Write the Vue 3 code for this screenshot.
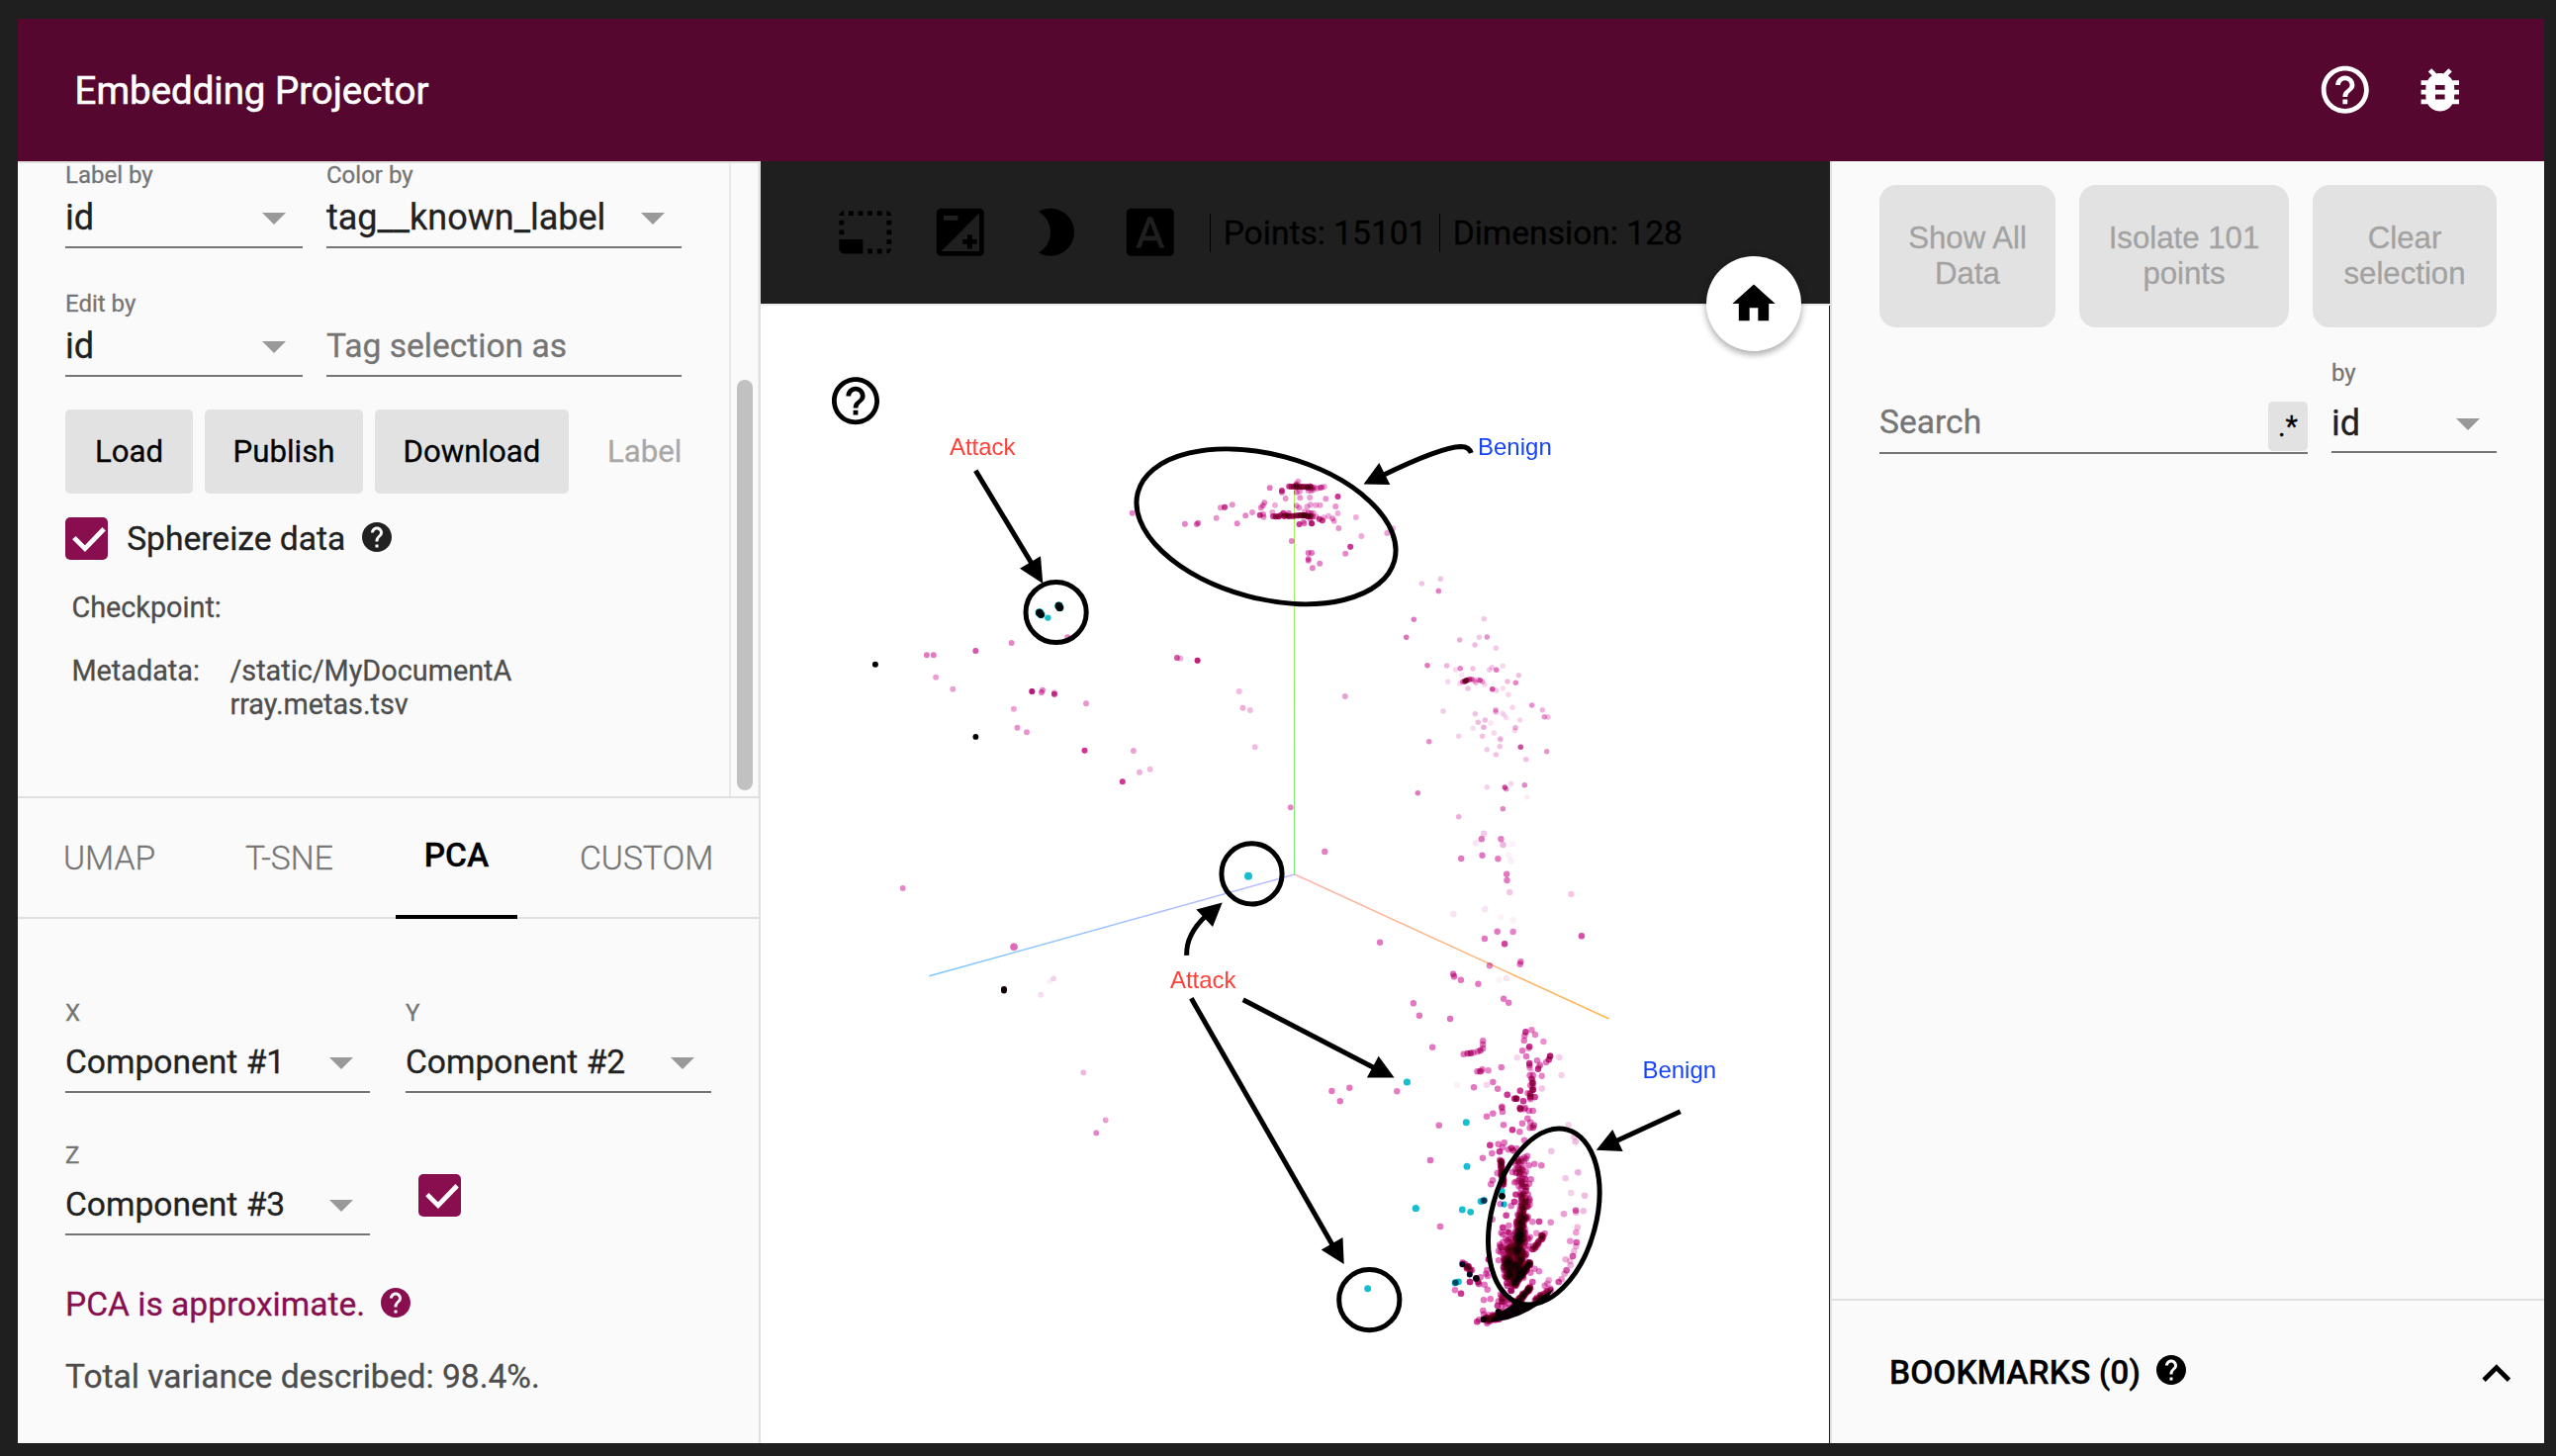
<script setup>
// Points are listed per tile of the canvas as "x,y,strength" in tile units.
// A strength above 1 stands for several samples stacked on one spot.
const tiles = [
  {
    x: 860, y: 400, sx: 2.613, sy: 3, r: 2.95,
    data: `744,356,.9 883,389,.9 914,390,1 918,386,1 966,371,.8 977,340,.8 988,338,2 1008,331,.8 1021,388,.9
    1043,364,.9 1061,354,.8 1084,340,.9 1089,333,.9 1093,325,.9 1081,362,2 1090,360,.9 1091,368,.8 1107,280,1
    1139,288,2 1139,293,1 1149,312,.8 1121,332,.6 1114,354,.7 1182,260,.7 1178,268,1 1178,293,.9 1187,310,.8
    1213,309,.7 1255,313,.8 1287,306,2 1281,336,.8 1287,357,.6 1178,334,.8 1185,340,.8 1206,337,.7 1215,331,.7
    1229,332,.7 1240,332,.7 1262,365,.6 1273,373,.8 1277,380,.7 1238,374,2 1246,379,2 1250,370,.6 1185,390,2
    1198,388,1 1196,382,.8 1218,388,3 1289,402,.8 1335,369,.6 1349,426,.6 1417,417,.7 1432,403,.6 1165,441,.9
    1209,477,1 1218,477,1 1209,495,1 1209,500,1 1220,523,.9 1239,509,.9 1320,458,2 1307,479,.9
    1158,275,2 1164,276,2 1170,276,3 1176,272,2 1178,277,4 1184,276,3 1190,277,3 1196,277,3 1203,277,3 1208,278,4
    1214,275,3 1218,280,2 1224,278,1 1232,281,.8 1240,279,1 1244,278,1 1251,276,.7 1209,288,.8 1217,288,.8 1222,286,.7 1186,290,.8
    1116,366,2 1123,367,3 1130,367,3 1137,362,2 1143,356,2 1145,365,3 1151,364,3 1157,365,4 1157,356,1 1164,365,2
    1170,365,2 1176,364,2 1182,364,3 1189,363,5 1196,363,6 1202,364,4 1208,366,4 1214,365,4 1220,367,1.5
    1199,352,.7 1209,355,1 1216,357,1 1222,356,.7 1229,367,.8 1214,374,1
    573,733,.9 425,750,.9 330,774,1.5 201,787,1 219,787,1 225,854,.7 270,890,.7 479,897,3 504,900,1 507,893,.9
    538,905,2 538,901,.6 622,934,.8 431,950,.7 440,1007,.8 465,1021,.8 618,1076,2 718,1171,2 747,1077,.7 763,1142,.6
    791,1133,.5 862,795,1.5 871,797,.6 916,803,2.7 1026,897,.5 1036,947,.6 1055,954,.5 1068,1066,.5 1306,912,.7
    1162,1249,.9`,
  },
  {
    x: 1380, y: 400, sx: 3, sy: 3, r: 2.75,
    data: `172,570,.45 229,556,.45 223,593,.8 223,590,.3 148,679,1 361,677,.4 125,733,1.1 287,741,.6 346,733,.4 370,732,.8
    333,756,.5 397,766,.4 189,818,1 248,819,.55 275,831,.3 289,827,.9 327,828,.45 377,832,.4 385,824,.4 398,832,1
    418,820,.3 466,848,.45 432,867,.5 457,871,.9 251,868,.3 293,847,.2 303,866,4 307,864,4 311,862,1 317,861,1.6
    324,860,1 331,864,.6 336,870,.6 342,862,.5 349,863,1.3 356,868,.6 296,868,1 288,873,.3 363,876,.3 312,888,.45
    386,890,1.6 398,894,.4 418,888,.25 435,907,.3 506,939,.8 538,953,.55 544,974,.8 555,975,.5 237,957,.4 334,965,.45
    396,954,.8 397,960,.5 447,946,.3 417,963,.25 422,969,.2 428,977,.25 470,984,.3 343,991,.5 364,984,.5 381,993,.2
    328,1009,.25 360,1006,.6 391,1023,.3 456,1007,.6 454,1016,.3 284,1033,.35 356,1033,.45 410,1041,.5 411,1045,.2
    370,1073,.4 409,1064,.45 397,1089,.45 472,1066,1.7 194,1049,.85 551,1079,.8 488,1103,.45 370,1187,.35
    424,1188,1.5 428,1193,.8 443,1177,.3 484,1181,.9 491,1218,.15 160,1205,1 418,1253,.9 284,1277,.6`,
  },
  {
    x: 860, y: 820, sx: 3, sy: 2.8, r: 2.9,
    data: `158,218,.9 615,474,.35 603,482,.12 577,520,.25 706,740,.55 773,875,.7 745,911,.9`,
  },
  {
    x: 1320, y: 820, sx: 2.958, sy: 3, r: 3.2,
    data: `57,123,.95 533,68,.4 526,85,1 584,85,.95 590,102,.55 617,100,.1 509,97,.2 528,134,1 465,144,1 575,145,.95
    608,134,.1 614,151,.12 601,191,1 602,210,1 610,246,.4 794,252,.4 536,298,.2 442,313,.2 583,322,.08 620,330,.1
    573,365,1 620,366,.9 535,387,1 595,403,1.8 825,379,1.6 222,398,1 550,469,.95 643,457,1 641,464,1 441,494,1.2
    444,502,1.2 464,512,1 516,524,1 578,512,.1 601,507,.2 592,569,1 607,581,1 322,583,1 340,620,1 432,630,1.1
    379,716,1 530,697,1 530,708,1 530,720,1 522,726,1.6 514,730,1 501,733,1 493,734,2 484,735,1.6 472,737,1
    513,790,1 521,789,1 528,784,1 524,790,1 546,787,.9 585,777,1 560,822,1 574,842,1 503,838,1 541,830,.3
    453,832,.1 603,860,1 625,872,1 631,872,2 642,848,1 651,880,1 587,896,1 641,900,2 656,900,1 676,664,.9
    658,670,2 655,681,1 686,678,.9 653,696,1 669,715,2 666,720,.6 648,727,1 660,744,1 711,699,.8 632,748,.3
    669,765,2 669,771,1 670,778,.8 692,757,1 701,770,1 695,782,2 697,776,.7 719,762,1 727,754,2 731,743,3
    758,747,.35 765,801,.35 706,803,.9 706,841,.25 670,802,1 680,802,1 676,792,.4 676,812,2 679,826,3 679,819,1 672,832,1 680,845,2
    679,836,1 664,856,1 673,864,1.6 685,868,1 672,874,1 131,839,1 78,849,1 103,880,1 273,850,.95`,
  },
  {
    x: 1300, y: 1100, sx: 3, sy: 3, r: 3.3,
    data: `671,20,1 698,32,2 693,32,1 710,8,.9 748,5,2 741,17,2 741,28,2 755,27,.9 776,2,.2 720,40,1 711,64,2.6
    723,64,1 737,69,1 749,69,1 609,86,1 628,77,1 655,60,1 657,72,1 660,112,1 687,127,2 709,133,1 717,107,1
    733,92,1 752,113,1.5 749,120,1.5 742,104,1 740,121,1 723,158,1 464,113,1 438,219,1.1 468,420,1 619,173,2
    644,170,1 662,166,1 657,180,1 648,193,2 625,198,1 597,212,1 684,182,2 690,190,1.6 675,187,1 700,184,1
    641,258,1 627,280,1 622,292,1 732,206,1 723,211,1 737,235,1 754,230,1 775,235,1 706,222,2 695,228,1
    857,112,.35 805,191,.45 878,163,.5 874,148,.4 886,256,.6 848,274,.4 865,318,.35 906,326,.5 879,371,1.4
    880,377,.5 902,373,.5 843,382,.7 803,407,.85 768,405,1.8 748,406,.9 884,422,.5 880,438,.7 862,464,.8
    881,468,1.4 880,480,.6 874,495,.5 848,520,.6 870,510,1.5 862,525,.5 863,537,.6 851,553,1.5 845,563,.7
    836,580,.8 827,588,1.6 797,583,.7 785,599,.9 793,593,.7 754,548,.9 768,556,.9 742,560,1 748,588,1.5
    743,277,1 738,290,1 650,352,1 668,386,1.8 626,398,1 615,520,2.5 760,440,.8 653,439,1 658,423,2 676,417,1
    683,358,1 693,345,2 649,475,1 645,494,1 652,498,1 513,613,1 531,623,2 558,588,2.6 583,588,2 585,594,1.5
    602,596,1 611,611,1 610,552,1 612,570,1 607,563,1 620,640,1 600,643,1 598,675,1 600,686,1 580,709,1.8
    586,703,1 590,574,1 683,614,4 672,600,1.6 657,627,1 655,647,2 675,635,1.6 642,660,2`,
  },
]

const points = []
const put = (x, y, strength, r) => {
  for (let s = strength; s > 0.01; s -= 1) {
    points.push({ x: x.toFixed(1), y: y.toFixed(1), r, o: Math.min(1, s).toFixed(2) })
  }
}

for (const t of tiles) {
  for (const token of t.data.trim().split(/\s+/)) {
    const [px, py, s] = token.split(',').map(Number)
    put(t.x + px / t.sx, t.y + py / t.sy, s, t.r)
  }
}
put(1025, 957.3, 1.2, 3.8)

// Deterministic noise for the dense streaks of the lower cluster.
let seed = 7
const rnd = () => {
  seed = (seed * 16807) % 2147483647
  return seed / 2147483647
}
// from, to, half width, samples
const streaks = [
  [710, 215, 720, 335, 27, 56],
  [726, 332, 720, 395, 16, 50],
  [716, 385, 706, 470, 19, 90],
  [712, 400, 708, 470, 9, 50],
  [700, 440, 690, 500, 48, 80],
  [692, 480, 690, 560, 50, 110],
  [672, 515, 676, 575, 14, 80],
  [706, 480, 708, 570, 18, 90],
  [686, 565, 700, 590, 32, 40],
  [651, 214, 659, 298, 4, 50],
  [784, 440, 748, 492, 6, 28],
  [742, 528, 692, 598, 6, 120],
  [742, 602, 668, 692, 6, 120],
  [650, 625, 680, 660, 20, 14],
  [606, 704, 664, 684, 14, 60],
  [535, 528, 562, 556, 7, 18],
  [755, 648, 806, 606, 7, 30],
]
for (const [x0, y0, x1, y1, w, n] of streaks) {
  const len = Math.hypot(x1 - x0, y1 - y0)
  for (let i = 0; i < n; i++) {
    const t = rnd()
    const d = (rnd() + rnd() - 1) * w
    put(
      1300 + (x0 + (x1 - x0) * t + ((y0 - y1) / len) * d) / 3,
      1100 + (y0 + (y1 - y0) * t + ((x1 - x0) / len) * d) / 3,
      1,
      3.2,
    )
  }
}

const cyan = [
  [1059.4, 624.6, 3.2], [1262, 885.7, 4], [1422.4, 1094, 3.6], [1482.3, 1134.7, 3.5], [1483, 1179.3, 3.5],
  [1431.3, 1221.7, 3.6], [1478.3, 1223, 3.4], [1486.7, 1225.3, 3.4], [1497, 1214.6, 3.4], [1499.6, 1214, 3.4],
  [1500.4, 1213.6, 3.4], [1518.3, 1204.5, 3.4], [1520.6, 1217.6, 3.1], [1382.7, 1302.7, 3.5], [1474.5, 1295.8, 3.4],
  [1471.6, 1296.6, 3.4], [1471, 1297, 3.4],
  [1050.8, 619.4, 4.3], [1052.3, 621, 4.3], [1070.4, 612.6, 4.3], [1071.4, 614, 4.3],
]

const dark = [
  [1050.8, 619.6, 3.8, '#00060a'], [1052.5, 621.6, 3.4, '#00060a'], [1070.4, 612.6, 3.8, '#00060a'],
  [1071.5, 614.4, 3.6, '#00060a'], [1518.5, 1209.3, 3.4, '#00060a'], [1500.4, 1213.8, 3, '#06304e'],
  [1471.3, 1296.7, 2.7, '#06405a'], [1478.4, 1278.3, 3, '#060424'], [1485.8, 1288.5, 3, '#060424'],
  [1492.4, 1292.4, 3.4, '#0a0006'], [884.9, 671.7, 3, '#000'], [986.4, 744.9, 2.9, '#000'],
  [1015, 1000, 3, '#14000c'], [1015, 1001.5, 3, '#14000c'], [1499.8, 1334, 3.2, '#0a0006'],
  [1514.8, 1326.3, 3.2, '#0a0006'],
]

const toolIcons = [
  'M23 15h-2v2h2v-2zm0-4h-2v2h2v-2zm0 8h-2v2c1 0 2-1 2-2zM15 3h-2v2h2V3zm8 4h-2v2h2V7zm-2-4v2h2c0-1-1-2-2-2zM3 21h8v-6H1v4c0 1.1.9 2 2 2zM3 7H1v2h2V7zm12 12h-2v2h2v-2zm4-16h-2v2h2V3zm0 16h-2v2h2v-2zM3 3C2 3 1 4 1 5h2V3zm0 8H1v2h2v-2zm8-8H9v2h2V3zM7 3H5v2h2V3z',
  'M15 17v2h2v-2h2v-2h-2v-2h-2v2h-2v2h2zm5-15H4c-1.1 0-2 .9-2 2v16c0 1.1.9 2 2 2h16c1.1 0 2-.9 2-2V4c0-1.1-.9-2-2-2zM5 5h6v2H5V5zm15 15H4L20 4v16z',
  'M10 2c-1.82 0-3.53.5-5 1.35C7.99 5.08 10 8.3 10 12s-2.01 6.92-5 8.65C6.47 21.5 8.18 22 10 22c5.52 0 10-4.48 10-10S15.52 2 10 2z',
  'M9.93 13.5h4.14L12 7.98zM20 2H4c-1.1 0-2 .9-2 2v16c0 1.1.9 2 2 2h16c1.1 0 2-.9 2-2V4c0-1.1-.9-2-2-2zm-4.05 16.5l-1.14-3H9.17l-1.12 3H5.96l5.11-13h1.86l5.11 13h-2.09z',
]
const helpOutline =
  'M11 18h2v-2h-2v2zm1-16C6.48 2 2 6.48 2 12s4.48 10 10 10 10-4.48 10-10S17.52 2 12 2zm0 18c-4.41 0-8-3.59-8-8s3.59-8 8-8 8 3.59 8 8-3.59 8-8 8zm0-14c-2.21 0-4 1.79-4 4h2c0-1.1.9-2 2-2s2 .9 2 2c0 2-3 1.75-3 5h2c0-2.25 3-2.5 3-5 0-2.21-1.79-4-4-4z'
const helpFilled =
  'M12 2C6.48 2 2 6.48 2 12s4.48 10 10 10 10-4.48 10-10S17.52 2 12 2zm1 17h-2v-2h2v2zm2.07-7.75l-.9.92C13.45 12.9 13 13.5 13 15h-2v-.5c0-1.1.45-2.1 1.17-2.83l1.24-1.26c.37-.36.59-.86.59-1.41 0-1.1-.9-2-2-2s-2 .9-2 2H8c0-2.21 1.79-4 4-4s4 1.79 4 4c0 .88-.36 1.68-.93 2.25z'
const bug =
  'M20 8h-2.81c-.45-.78-1.07-1.45-1.82-1.96L17 4.41 15.59 3l-2.17 2.17C12.96 5.06 12.49 5 12 5c-.49 0-.96.06-1.41.17L8.41 3 7 4.41l1.62 1.63C7.88 6.55 7.26 7.22 6.81 8H4v2h2.09c-.05.33-.09.66-.09 1v1H4v2h2v1c0 .34.04.67.09 1H4v2h2.81c1.04 1.79 2.97 3 5.19 3s4.15-1.21 5.19-3H20v-2h-2.09c.05-.33.09-.66.09-1v-1h2v-2h-2v-1c0-.34-.04-.67-.09-1H20V8zm-6 8h-4v-2h4v2zm0-4h-4v-2h4v2z'
const check = 'M3.7 8.6 L8.3 13.2 L16.3 4.9'
</script>

<template>
  <div class="window">
    <header class="appbar">
      <h1>Embedding Projector</h1>
      <nav class="appbar-actions">
        <svg class="icon" viewBox="0 0 24 24"><path :d="helpOutline" /></svg>
        <svg class="icon" viewBox="0 0 24 24"><path :d="bug" /></svg>
      </nav>
    </header>

    <main class="columns">
      <aside class="left">
        <section class="data">
          <div class="data-body">
            <div class="fields">
              <div class="field">
                <label>Label by</label>
                <div class="value">id<i class="caret"></i></div>
              </div>
              <div class="field">
                <label>Color by</label>
                <div class="value">tag__known_label<i class="caret"></i></div>
              </div>
              <div class="field">
                <label>Edit by</label>
                <div class="value">id<i class="caret"></i></div>
              </div>
              <div class="field">
                <label></label>
                <div class="value hint">Tag selection as</div>
              </div>
            </div>
            <div class="buttons">
              <button class="load">Load</button>
              <button class="publish">Publish</button>
              <button class="download">Download</button>
              <button class="flat">Label</button>
            </div>
            <div class="sphereize">
              <span class="checkbox"><svg viewBox="0 0 18 18"><path :d="check" /></svg></span>
              <span>Sphereize data</span>
              <svg class="help" viewBox="0 0 24 24"><path :d="helpFilled" /></svg>
            </div>
            <dl class="meta">
              <dt>Checkpoint:</dt>
              <dd></dd>
              <dt>Metadata:</dt>
              <dd>/static/MyDocumentA<br />rray.metas.tsv</dd>
            </dl>
          </div>
          <div class="track"><div class="thumb"></div></div>
        </section>

        <section class="projections">
          <div class="tabs">
            <span class="tab umap">UMAP</span>
            <span class="tab tsne">T-SNE</span>
            <span class="tab active">PCA</span>
            <span class="tab custom">CUSTOM</span>
          </div>
          <div class="pca">
            <div class="axes">
              <div class="field tall">
                <label>X</label>
                <div class="value">Component #1<i class="caret"></i></div>
              </div>
              <div class="field tall">
                <label>Y</label>
                <div class="value">Component #2<i class="caret"></i></div>
              </div>
              <div class="field tall">
                <label>Z</label>
                <div class="value">Component #3<i class="caret"></i></div>
              </div>
              <span class="checkbox"><svg viewBox="0 0 18 18"><path :d="check" /></svg></span>
            </div>
            <p class="approx">
              PCA is approximate.
              <svg class="help" viewBox="0 0 24 24"><path :d="helpFilled" /></svg>
            </p>
            <p class="variance">Total variance described: 98.4%.</p>
          </div>
        </section>
      </aside>

      <section class="center">
        <div class="toolbar">
          <svg v-for="(d, i) in toolIcons" :key="i" class="icon" viewBox="0 0 24 24"><path :d="d" /></svg>
          <span class="stat points">Points: 15101</span>
          <span class="stat dims">Dimension: 128</span>
          <button class="home">
            <svg viewBox="0 0 24 24"><path d="M10 20v-6h4v6h5v-8h3L12 3 2 12h3v8z" /></svg>
          </button>
        </div>
        <svg class="scatter" viewBox="769 309 1080 1150">
          <defs>
            <linearGradient id="ax" gradientUnits="userSpaceOnUse" x1="1309" y1="884" x2="1627" y2="1030">
              <stop offset="0" stop-color="#ffb4b4" />
              <stop offset="1" stop-color="#ffb347" />
            </linearGradient>
            <linearGradient id="az" gradientUnits="userSpaceOnUse" x1="1309" y1="884" x2="939" y2="987">
              <stop offset="0" stop-color="#bcb8ff" />
              <stop offset="1" stop-color="#7cc8ff" />
            </linearGradient>
            <linearGradient id="ay" gradientUnits="userSpaceOnUse" x1="1308" y1="495" x2="1308" y2="884">
              <stop offset="0" stop-color="#aaf25e" />
              <stop offset="1" stop-color="#74ee74" />
            </linearGradient>
          </defs>
          <rect x="769" y="309" width="1080" height="1150" fill="#fff" />
          <g class="axis-lines">
            <path d="M1309 884L1626.6 1030" stroke="url(#ax)" />
            <path d="M1309 884L939.3 986.8" stroke="url(#az)" />
            <rect x="1308" y="495" width="1" height="389" fill="url(#ay)" />
          </g>
          <g class="samples">
            <circle v-for="(p, i) in points" :key="i" :cx="p.x" :cy="p.y" :r="p.r" :fill-opacity="p.o" />
          </g>
          <g class="attack-samples">
            <circle v-for="(c, i) in cyan" :key="i" :cx="c[0]" :cy="c[1]" :r="c[2]" />
          </g>
          <circle v-for="(c, i) in dark" :key="'d' + i" :cx="c[0]" :cy="c[1]" :r="c[2]" :fill="c[3]" />
          <!-- solid rim where the lower streak curls towards the right -->
          <path class="rim" d="M1505 1337Q1517 1325 1532 1318L1550 1317L1570 1303L1566 1311Q1545 1329 1522 1334.5Z" />

          <g class="notes">
            <ellipse cx="1280" cy="532.3" rx="134.2" ry="72.8" transform="rotate(14.9 1280 532.3)" />
            <ellipse cx="1560.8" cy="1230" rx="91" ry="52.8" transform="rotate(-75 1560.8 1230)" />
            <circle cx="1067.6" cy="619" r="30.6" />
            <circle cx="1265.5" cy="883.4" r="30.6" />
            <circle cx="1384.3" cy="1314.2" r="30.6" />
            <path d="M986.3 475.7L1045 573" />
            <path d="M1487.3 458Q1485 451.5 1477 451.5C1460 452 1430 465 1398 480.5" />
            <path d="M1199.7 965.8C1199 950 1207 937 1220 925" />
            <path d="M1204.3 1009.3L1349 1262" />
            <path d="M1256.7 1010.7L1390 1080" />
            <path d="M1698.7 1123.7L1633 1154" />
          </g>
          <g class="heads">
            <path d="M1054.3 590L1052 562.3L1031 574.7Z" />
            <path d="M1378.5 489.4L1394.3 468L1405.3 490Z" />
            <path d="M1235.7 912.5L1209.3 919.6L1226 937Z" />
            <path d="M1358.7 1278L1335.7 1263.6L1357.5 1251Z" />
            <path d="M1409.6 1089.4L1393.7 1067.7L1381.9 1089.4Z" />
            <path d="M1613.7 1162.7L1630.3 1142L1640.7 1164Z" />
          </g>
          <text class="attack" x="959.9" y="460.4">Attack</text>
          <text class="attack" x="1182.9" y="999.4">Attack</text>
          <text class="benign" x="1494" y="460.4">Benign</text>
          <text class="benign" x="1660.4" y="1090.2">Benign</text>
          <svg x="836.2" y="376.4" width="57.6" height="57.6" viewBox="0 0 24 24"><path :d="helpOutline" /></svg>
        </svg>
      </section>

      <aside class="right">
        <div class="selection">
          <button>Show All<br />Data</button>
          <button>Isolate 101<br />points</button>
          <button>Clear<br />selection</button>
        </div>
        <div class="search-row">
          <div class="search">
            <span>Search</span>
            <button>.*</button>
          </div>
          <div class="field tall by">
            <label>by</label>
            <div class="value">id<i class="caret"></i></div>
          </div>
        </div>
        <footer class="bookmarks">
          <strong>BOOKMARKS (0)</strong>
          <svg class="help" viewBox="0 0 24 24"><path :d="helpFilled" /></svg>
          <svg class="icon chevron" viewBox="0 0 24 24"><path d="M12 8l-6 6 1.41 1.41L12 10.83l4.59 4.58L18 14z" /></svg>
        </footer>
      </aside>
    </main>
  </div>
</template>

<style>
body {
  background: #1f1f1f;
}
</style>

<style scoped>
* {
  box-sizing: border-box;
}
.window {
  width: 2584px;
  height: 1472px;
  padding: 19px 12px 13px 18px;
  background: #1f1f1f;
  font-family: Roboto, 'Liberation Sans', sans-serif;
  font-size: 33.6px;
  color: #212121;
  -webkit-text-stroke: 0.3px currentColor;
  overflow: hidden;
}
button {
  margin: 0;
  padding: 0;
  border: 0;
  font: inherit;
  color: inherit;
}
svg {
  display: block;
}
.icon {
  width: 57.6px;
  height: 57.6px;
  fill: currentColor;
}
.help {
  width: 36px;
  height: 36px;
  fill: currentColor;
}
.appbar {
  display: flex;
  align-items: center;
  justify-content: space-between;
  height: 144px;
  padding: 0 76.5px 0 57.6px;
  background: #55072f;
  color: #fff;
}
.appbar h1 {
  margin: 0;
  font-size: 38.4px;
  font-weight: 400;
  -webkit-text-stroke: 0.6px currentColor;
}
.appbar-actions {
  display: flex;
  gap: 38.4px;
}
.columns {
  display: grid;
  grid-template-columns: 751px 1081px 722px;
  height: 1296px;
}

/* left column */
.left {
  display: flex;
  flex-direction: column;
  border-top: 2px solid #e0e0e0;
  border-right: 2px solid #e0e0e0;
  background: #fafafa;
}
.data {
  display: flex;
  height: 640px;
}
.data-body {
  width: 719px;
  padding-left: 48px;
}
.track {
  flex: 1;
  padding: 219px 0 0 6px;
  border-left: 2px solid #e8e8e8;
  border-right: 1px solid #eee;
}
.thumb {
  width: 16px;
  height: 415px;
  border-radius: 8px;
  background: #c1c1c1;
}
.fields {
  display: grid;
  grid-template-columns: 240px 359px;
  gap: 44px 24px;
}
.field label {
  display: block;
  height: 24px;
  line-height: 24px;
  font-size: 24px;
  color: #757575;
}
.field .value {
  display: flex;
  align-items: center;
  justify-content: space-between;
  height: 52px;
  margin-top: 10px;
  padding: 1px 17px 9px 0;
  border-bottom: 2px solid #757575;
  line-height: 40px;
  font-size: 36px;
}
.field .value.hint {
  font-size: 33.6px;
  color: #757575;
}
.field.tall .value {
  margin-top: 17px;
  font-size: 33.6px;
}
.caret {
  margin-top: 2px;
  border: 12px solid transparent;
  border-top-color: #999;
  border-bottom: 0;
}
.buttons {
  display: flex;
  gap: 12px;
  margin-top: 33px;
}
.buttons button {
  height: 85px;
  border-radius: 5px;
  background: #e2e2e2;
  font-size: 31.2px;
  color: #000;
}
.buttons .load {
  width: 129px;
}
.buttons .publish {
  width: 160px;
}
.buttons .download {
  width: 196px;
}
.buttons .flat {
  padding-left: 27px;
  background: none;
  color: #a8a8a8;
}
.sphereize {
  display: flex;
  align-items: center;
  height: 43px;
  margin-top: 24px;
}
.sphereize .checkbox {
  margin-right: 19px;
}
.sphereize .help {
  margin: -3px 0 0 14px;
}
.checkbox {
  width: 43.2px;
  height: 43.2px;
  border-radius: 5px;
  background: #880e4f;
}
.checkbox svg {
  fill: none;
  stroke: #fff;
  stroke-width: 2;
}
.meta {
  display: grid;
  grid-template-columns: 160px 1fr;
  row-gap: 29px;
  margin: 31px 0 0 6.4px;
  font-size: 28.8px;
  line-height: 34.6px;
  color: #4d4d4d;
}
.meta dd {
  margin: 0;
}
.projections {
  flex: 1;
  border-top: 2px solid #e0e0e0;
}
.tabs {
  display: flex;
  height: 122px;
  border-bottom: 2px solid #e0e0e0;
  line-height: 122px;
}
.tab {
  font-weight: 300;
  color: #757575;
}
.umap {
  width: 183px;
  padding-left: 46px;
}
.tsne {
  width: 199px;
  padding-left: 47px;
}
.active {
  width: 123px;
  height: 122px;
  border-bottom: 4px solid #000;
  line-height: 116px;
  font-weight: 500;
  color: #000;
  text-align: center;
}
.custom {
  padding-left: 63px;
}
.pca {
  padding: 83px 0 0 48px;
}
.axes {
  display: grid;
  grid-template-columns: 308px 309px;
  gap: 51px 36px;
}
.axes .checkbox {
  margin: 31px 0 0 13px;
}
.approx,
.variance {
  display: flex;
  align-items: center;
  height: 40px;
  margin: 50px 0 0;
  line-height: 40px;
  color: #880e4f;
}
.approx .help {
  margin: -4px 0 0 13px;
}
.variance {
  margin-top: 33px;
  color: #4d4d4d;
}

/* centre column */
.center {
  background: #fff;
}
.toolbar {
  position: relative;
  display: flex;
  align-items: center;
  height: 146px;
  border-bottom: 2px solid #ececec;
  padding-left: 76.9px;
  background: #1f1f1f;
  color: #000;
}
.toolbar .icon {
  margin-right: 38.6px;
}
.stat {
  height: 39px;
  padding-left: 13px;
  border-left: 1.5px solid #000;
  line-height: 40px;
}
.points {
  margin-left: -8px;
  width: 232px;
}
.home {
  position: absolute;
  z-index: 1;
  left: 955.5px;
  top: 96px;
  display: grid;
  place-items: center;
  width: 96px;
  height: 96px;
  border-radius: 50%;
  background: #fff;
  box-shadow: 0 4px 6px rgba(0, 0, 0, 0.25), 0 1px 10px rgba(0, 0, 0, 0.12);
}
.home svg {
  width: 52px;
  height: 52px;
}
.scatter {
  width: 1081px;
  height: 1150px;
  border-right: 1px solid #1f1f1f;
  isolation: isolate;
}
.axis-lines path {
  stroke-width: 1.5;
}
.samples circle {
  fill: #e377c2;
  mix-blend-mode: multiply;
}
.attack-samples circle {
  fill: #17becf;
  mix-blend-mode: multiply;
}
.rim {
  fill: #080004;
}
.notes {
  fill: none;
  stroke: #000;
  stroke-width: 5;
}
.attack,
.benign {
  font-family: 'Liberation Sans', Arial, sans-serif;
  font-size: 24px;
}
.attack {
  fill: #ff4038;
}
.benign {
  fill: #1544ff;
}

/* right column */
.right {
  display: flex;
  flex-direction: column;
  border-left: 2px solid #e0e0e0;
  background: #fafafa;
}
.selection {
  display: grid;
  grid-template-columns: 178px 212px 186px;
  gap: 24px;
  padding: 24px 0 0 48px;
}
.selection button {
  height: 144px;
  border-radius: 17px;
  background: #e2e2e2;
  font-family: 'Liberation Sans', Arial, sans-serif;
  font-size: 31.2px;
  line-height: 36px;
  color: #a2a2a2;
}
.search-row {
  display: flex;
  align-items: flex-end;
  gap: 24px;
  margin: 34px 0 0 48px;
}
.search {
  display: flex;
  justify-content: space-between;
  width: 433px;
  height: 53px;
  border-bottom: 2px solid #757575;
  line-height: 42px;
  color: #757575;
}
.search button {
  width: 40px;
  height: 50px;
  border-radius: 5px;
  background: #e2e2e2;
  font-size: 28.8px;
  color: #000;
}
.by {
  width: 167px;
  margin-bottom: 1px;
}
.field.by .value {
  height: 51px;
  margin-top: 18px;
  padding-bottom: 8px;
  font-size: 36px;
}
.bookmarks {
  display: flex;
  align-items: center;
  height: 146px;
  margin-top: auto;
  padding: 0 19px 0 58px;
  border-top: 2px solid #e0e0e0;
  color: #000;
}
.bookmarks strong {
  font-weight: 500;
}
.bookmarks .help {
  margin: -5px 0 0 13px;
}
.chevron {
  margin: 3px 0 0 auto;
}
</style>
